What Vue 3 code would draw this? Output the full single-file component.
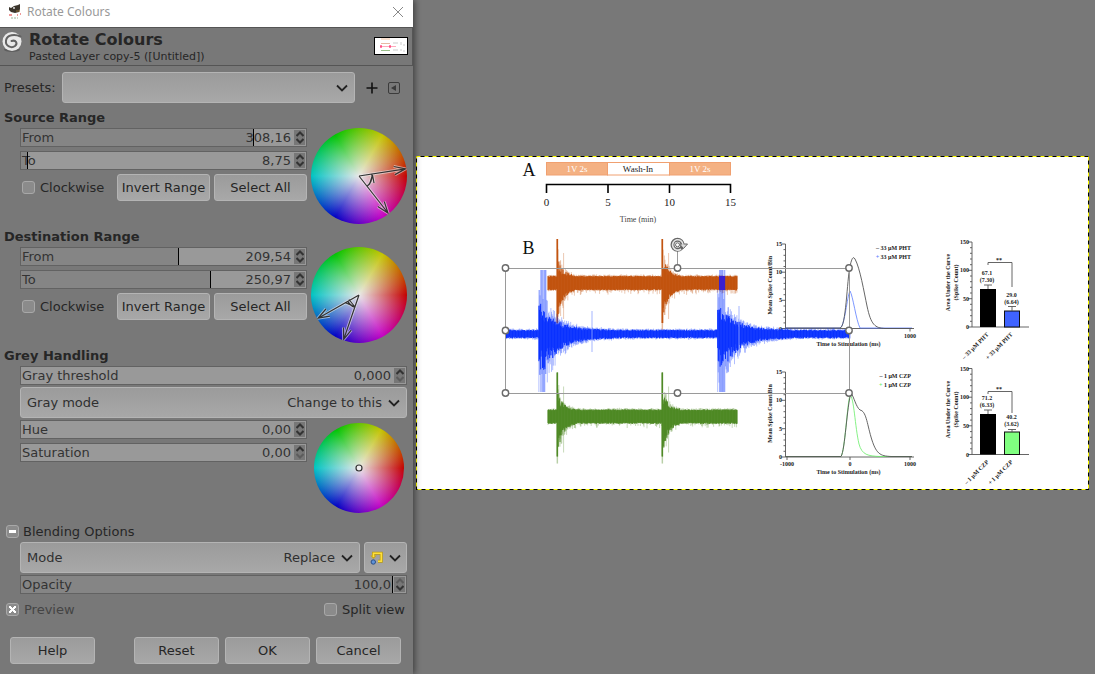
<script setup>
import { ref } from 'vue'

const polar = (deg, r) => {
  const a = (deg * Math.PI) / 180
  return [48 + Math.cos(a) * r, 48 - Math.sin(a) * r]
}
const pt = ([x, y]) => `${x.toFixed(1)} ${y.toFixed(1)}`

function ray(deg) {
  const tip = polar(deg, 47)
  const head = (side) => {
    const a = ((deg + 180 + side * 20) * Math.PI) / 180
    return [tip[0] + Math.cos(a) * 12, tip[1] - Math.sin(a) * 12]
  }
  return `M48 48L${pt(tip)}M${pt(head(1))}L${pt(tip)}L${pt(head(-1))}`
}

function rangePath(from, to, marker) {
  const s = polar(from, 13)
  const e = polar(to, 13)
  return `${ray(from)}${ray(to)}M${pt(s)}A13 13 0 0 0 ${pt(e)}${marker}`
}

const sections = [
  {
    id: 'source', title: 'Source Range',
    path: rangePath(308.16, 368.75, 'M58.500 56.500L61.500 47L63 55'),
    fields: [
      { id: 'source-from', label: 'From', value: '308,16', fill: 85.6 },
      { id: 'source-to', label: 'To', value: '8,75', fill: 2.4 },
    ],
  },
  {
    id: 'dest', title: 'Destination Range',
    path: rangePath(209.54, 250.97, 'M34 55.500L44 60L38 52.500'),
    fields: [
      { id: 'dest-from', label: 'From', value: '209,54', fill: 58.2 },
      { id: 'dest-to', label: 'To', value: '250,97', fill: 69.7 },
    ],
  },
]
const greyFields = [
  { id: 'hue', label: 'Hue', value: '0,00', fill: 0 },
  { id: 'saturation', label: 'Saturation', value: '0,00', fill: 0, atMin: true },
]
const preview = ref(true)

let seed = 7
const rand = () => {
  seed = (seed * 16807) % 2147483647
  return seed / 2147483647
}

function trace(x0, x1, step, cy, envelope) {
  let d = ''
  for (let x = x0; x <= x1; x += step) {
    const [up, down] = envelope(x)
    d += `M${x.toFixed(1)} ${(cy - up).toFixed(1)}V${(cy + down).toFixed(1)}`
  }
  return d
}

function bandEnvelope(light) {
  return (x) => {
    let up = 6 + rand() * 1.2
    let down = 6 + rand() * 1.4
    if (light) {
      up += rand() * 1.6
      down += rand() ** 4 * 5
    }
    for (const start of [556.5, 661.5]) {
      const d = x - start
      if (d >= 0 && d <= 1.4) return [44, light ? 47 : 40]
      if (d > 1.4 && d < 18) {
        const k = Math.exp(-d / 5.5) * (light ? 1.1 : 0.8)
        up += (0.2 + rand() * 0.8) * 34 * k
        down += (0.5 + rand() * 0.5) * 46 * k
      }
      if (light && d >= 7 && d <= 7.6) return [30, 36]
    }
    return [up, down]
  }
}

function blueEnvelope(light) {
  return (x) => {
    let up = 2.8 + rand() * 1.6
    let down = 2.8 + rand() * 1.6
    if (light) {
      up += rand() * 1.6
      down += rand() * 1.6
    }
    for (const start of [538.5, 717.5]) {
      const d = x - start
      if (light && d >= 0 && d < 0.8) return [44, 58]
      if (light && d >= 2 && d < 8) return [rand() > 0.12 ? 64 : 35, rand() > 0.2 ? 58 : 40]
      if (d >= 0 && d < 75) {
        const k = Math.exp(-d / 17) * (light ? 1.45 : 0.9)
        const rise = Math.min(1, 0.5 + d / 8)
        up += (0.4 + rand() * 0.6) * 34 * k
        down += (0.4 + rand() * 0.6) * 52 * k * rise
      }
    }
    return [up, down]
  }
}

const waves = [
  { d: trace(548, 737.5, 0.6, 283, bandEnvelope(true)), cls: 'orange light' },
  { d: trace(548, 737.5, 0.6, 283, bandEnvelope(false)), cls: 'orange' },
  { d: trace(548, 737.5, 0.6, 416.5, bandEnvelope(true)), cls: 'green light' },
  { d: trace(548, 737.5, 0.6, 416.5, bandEnvelope(false)), cls: 'green' },
  { d: trace(506.5, 850, 0.6, 334, blueEnvelope(true)), cls: 'blue light' },
  { d: trace(506.5, 850, 0.6, 334, blueEnvelope(false)), cls: 'blue' },
]

const ticks = (x, top, bottom, n, major) => {
  let d = ''
  for (let i = 0; i <= n; i++) {
    const y = bottom - ((bottom - top) * i) / n
    d += `M${x - (i % major ? 2 : 4)} ${y.toFixed(1)}H${x}`
  }
  return d
}

const lineCharts = [
  {
    top: 244, bottom: 328.5, drug: '33 μM PHT', color: '#5b7cff', legend: 250,
    xs: [['1000', 910]],
    main: 'M785 328H840C846 328 847 280 850 266C852 258 853 256 855 259C860 268 864 292 867 306C871 325 875 328 885 328.5H912',
    second: 'M785 328H840C845 326 847 296 850 291C853 296 856 320 860 328H912',
  },
  {
    top: 372, bottom: 457, drug: '1 μM CZP', color: '#67ee67', legend: 378,
    xs: [['-1000', 787], ['0', 850], ['1000', 910]],
    main: 'M785 456.5H841C845 451 847 405 851 393C854 397 856 407 860 410C866 411 867 423 871 437C876 454 880 456 891 456.5H912',
    second: 'M785 456.5H841C845 451 847 405 850 395C854 397 855 427 859 444C862 455 868 456 880 456.5H912',
  },
]

const barCharts = [
  {
    top: 242, bottom: 327, drug: '33 μM PHT', color: '#3f63ff',
    a: 289, b: 311, errA: 285, errB: 306.5, ta: ['67.1', '(7.30)', 275], tb: ['29.0', '(6.64)', 297],
    bracket: 'M988 265V262.5H1012V287', star: 262,
  },
  {
    top: 368.5, bottom: 454.5, drug: '1 μM CZP', color: '#80ff80',
    a: 414, b: 432, errA: 410, errB: 429.5, ta: ['71.2', '(6.33)', 400], tb: ['40.2', '(3.62)', 419],
    bracket: 'M988 394V391.5H1012V413', star: 391,
  },
]

const handles = [
  [505.5, 268], [677.5, 268], [849, 268], [505.5, 330.5], [849, 330.5],
  [505.5, 393], [677.5, 393], [849, 393],
]
</script>

<template>
  <div class="screen">
    <section class="dialog" aria-label="Rotate Colours">
      <div class="titlebar">
        <svg class="app-icon" viewBox="0 0 14 16" aria-hidden="true">
          <path d="M1 3l2 1 3-2 4-1 2-1v5l-1 3-4 1-4-1-2-2z" fill="#3b352c" />
          <circle cx="6" cy="4" r="1" fill="#ddd" />
          <path d="M8 7h4" stroke="#8a6a35" />
          <path d="M1 11h3M9 11h1M12 10h1" stroke="#d33" />
          <path d="M3 14h7" stroke="#9bb59b" stroke-dasharray="2 1" />
        </svg>
        <span class="title-text">Rotate Colours</span>
        <button class="close" aria-label="Close">
          <svg viewBox="0 0 12 12"><path d="M1 1l10 10M11 1L1 11" /></svg>
        </button>
      </div>

      <header class="header">
        <svg class="logo" viewBox="0 0 22 22" aria-hidden="true">
          <ellipse cx="11" cy="18.500" rx="8" ry="2.500" fill="#4c4c4c" opacity=".6" />
          <circle cx="11" cy="10.500" r="9.500" fill="#e8e8e8" />
          <path d="M19.500 5.500C14 3 6 3.500 5 9.500C4.200 15.500 10.500 17.500 14 15C17 12.500 15 8.500 10.500 10" fill="none" stroke="#626262" stroke-width="2" stroke-linecap="round" />
        </svg>
        <div class="names">
          <h1>Rotate Colours</h1>
          <p>Pasted Layer copy-5 ([Untitled])</p>
        </div>
        <svg class="thumb" viewBox="0 0 34 18" aria-hidden="true">
          <rect x=".5" y=".5" width="33" height="17" fill="#fff" stroke="#000" />
          <path d="M7 2h9" stroke="#f4b183" opacity=".7" />
          <path d="M7 6.500h9" stroke="#e9b8a4" />
          <path d="M6 9.500h16" stroke="#fab" />
          <path d="M7 8v3M16 8v3" stroke="#f05" />
          <path d="M7 13.500h9" stroke="#9abf8a" />
          <path d="M19 6h5M19 13h5M27 5v3M30 7v2M27 12v2M29 14h2" stroke="#ccc" />
        </svg>
      </header>

      <div class="content">
        <div class="presets">
          <label for="presets">Presets:</label>
          <div class="combo">
            <select id="presets"><option></option></select>
            <svg class="chevron" viewBox="0 0 12 8"><path d="M1 1.500l5 5 5-5" /></svg>
          </div>
          <button class="bare plus" aria-label="Add preset">
            <svg viewBox="0 0 12 12"><path d="M6 .5v11M.5 6h11" /></svg>
          </button>
          <button class="bare menu" aria-label="Manage presets">
            <svg viewBox="0 0 12 12">
              <rect x=".5" y=".5" width="11" height="11" rx="1.500" fill="none" stroke="#3b3b3b" />
              <path d="M8 3v6L3 6z" fill="#3b3b3b" />
            </svg>
          </button>
        </div>

        <section v-for="s in sections" :key="s.id" class="group">
          <h2>{{ s.title }}</h2>
          <div class="with-wheel">
            <div class="fields">
              <div v-for="f in s.fields" :key="f.id" class="spin">
                <div class="track cursor" :style="{ '--fill': f.fill + '%' }">
                  <label :for="f.id">{{ f.label }}</label>
                  <input :id="f.id" type="text" :value="f.value" />
                </div>
                <div class="steps">
                  <button aria-label="Increase"><svg viewBox="0 0 8 6"><path d="M.5 5L4 1.500 7.500 5" /></svg></button>
                  <button aria-label="Decrease"><svg viewBox="0 0 8 6"><path d="M.5 1L4 4.500 7.500 1" /></svg></button>
                </div>
              </div>
              <div class="range-row">
                <label class="check"><input type="checkbox" />Clockwise</label>
                <button class="btn">Invert Range</button>
                <button class="btn">Select All</button>
              </div>
            </div>
            <svg class="wheel" viewBox="0 0 96 96" aria-hidden="true">
              <path class="halo" :d="s.path" />
              <path class="ink" :d="s.path" />
            </svg>
          </div>
        </section>

        <section class="group">
          <h2>Grey Handling</h2>
          <div class="inset stack">
            <div class="spin">
              <div class="track">
                <label for="threshold">Gray threshold</label>
                <input id="threshold" type="text" value="0,000" />
              </div>
              <div class="steps">
                <button aria-label="Increase"><svg viewBox="0 0 8 6"><path d="M.5 5L4 1.500 7.500 5" /></svg></button>
                <button aria-label="Decrease" disabled><svg viewBox="0 0 8 6"><path d="M.5 1L4 4.500 7.500 1" /></svg></button>
              </div>
            </div>
            <div class="combo">
              <label for="gray-mode">Gray mode</label>
              <select id="gray-mode"><option>Change to this</option></select>
              <svg class="chevron" viewBox="0 0 12 8"><path d="M1 1.500l5 5 5-5" /></svg>
            </div>
          </div>
          <div class="with-wheel grey">
            <div class="fields">
              <div v-for="f in greyFields" :key="f.id" class="spin">
                <div class="track">
                  <label :for="f.id">{{ f.label }}</label>
                  <input :id="f.id" type="text" :value="f.value" />
                </div>
                <div class="steps">
                  <button aria-label="Increase"><svg viewBox="0 0 8 6"><path d="M.5 5L4 1.500 7.500 5" /></svg></button>
                  <button aria-label="Decrease" :disabled="f.atMin"><svg viewBox="0 0 8 6"><path d="M.5 1L4 4.500 7.500 1" /></svg></button>
                </div>
              </div>
            </div>
            <svg class="wheel small" viewBox="0 0 90 90" aria-hidden="true">
              <circle cx="45" cy="45" r="3" fill="#eee" stroke="#333" stroke-width="1.200" />
            </svg>
          </div>
        </section>

        <section class="blending">
          <button class="bare expander" aria-expanded="true"><span class="minus"></span>Blending Options</button>
          <div class="inset stack">
            <div class="mode-row">
              <div class="combo">
                <label for="mode">Mode</label>
                <select id="mode"><option>Replace</option></select>
                <svg class="chevron" viewBox="0 0 12 8"><path d="M1 1.500l5 5 5-5" /></svg>
              </div>
              <button class="combo blend" aria-label="Blend mode group">
                <svg class="loop" viewBox="0 0 14 14">
                  <path d="M3.500 5V2.200H11.300v8H8" fill="none" stroke="#b99b12" stroke-width="3" />
                  <path d="M.3 4.500h6.400l-3.200 3.500z" fill="#c9a818" />
                  <path d="M3.500 6V2.200H11.300v8H8" fill="none" stroke="#ffe03a" stroke-width="1.600" />
                  <circle cx="3.300" cy="11" r="2.200" fill="#5f93d8" stroke="#2c4f86" />
                </svg>
                <svg class="chevron" viewBox="0 0 12 8"><path d="M1 1.500l5 5 5-5" /></svg>
              </button>
            </div>
            <div class="spin opacity">
              <div class="track cursor" :style="{ '--fill': '100%' }">
                <label for="opacity">Opacity</label>
                <input id="opacity" type="text" value="100,0" />
              </div>
              <div class="steps">
                <button aria-label="Increase" disabled><svg viewBox="0 0 8 6"><path d="M.5 5L4 1.500 7.500 5" /></svg></button>
                <button aria-label="Decrease"><svg viewBox="0 0 8 6"><path d="M.5 1L4 4.500 7.500 1" /></svg></button>
              </div>
            </div>
          </div>
        </section>

        <div class="views">
          <label class="check dim"><input v-model="preview" type="checkbox" />Preview</label>
          <label class="check"><input type="checkbox" />Split view</label>
        </div>

        <footer class="actions">
          <button class="btn help">Help</button>
          <button class="btn">Reset</button>
          <button class="btn">OK</button>
          <button class="btn">Cancel</button>
        </footer>
      </div>
    </section>

    <main class="workspace">
      <svg class="figure" viewBox="416 156 673 334" role="img" aria-label="Figure">
        <rect x="416" y="156" width="673" height="334" fill="#fff" />

        <text x="522.500" y="175.500" class="letter">A</text>
        <g stroke="#f0a070">
          <rect x="546.500" y="162.500" width="61" height="12.500" fill="#f4b183" />
          <rect x="607.500" y="162.500" width="62" height="12.500" fill="#fff" />
          <rect x="669.500" y="162.500" width="61" height="12.500" fill="#f4b183" />
        </g>
        <g class="phase">
          <text x="577" y="172" fill="#fff">1V 2s</text>
          <text x="638" y="172" fill="#222">Wash-In</text>
          <text x="700" y="172" fill="#fff">1V 2s</text>
        </g>
        <path d="M546.500 193V184.500H730.500V193M608 184.500V193M669.500 184.500V193" fill="none" stroke="#000" stroke-width="1.600" />
        <g class="minutes">
          <text x="546.500" y="206">0</text>
          <text x="608" y="206">5</text>
          <text x="669.500" y="206">10</text>
          <text x="730.500" y="206">15</text>
        </g>
        <text x="638" y="222" class="time">Time (min)</text>
        <text x="522.500" y="254" class="letter">B</text>

        <g v-for="(c, i) in lineCharts" :key="'l' + i" class="chart">
          <path :d="`M785.500 ${c.top}V${c.bottom}H914` + ticks(785.5, c.top, c.bottom, 15, 5)" class="axis" />
          <path v-for="x in c.xs" :key="x[0]" :d="`M${x[1]} ${c.bottom}v3`" class="axis" />
          <text v-for="n in 4" :key="n" x="782" :y="c.bottom + 2 - ((n - 1) * (c.bottom - c.top)) / 3" text-anchor="end">{{ (n - 1) * 5 }}</text>
          <text v-for="x in c.xs" :key="'t' + x[0]" :x="x[1]" :y="c.bottom + 9" text-anchor="middle">{{ x[0] }}</text>
          <path :d="c.second" fill="none" :stroke="c.color" stroke-width=".8" />
          <path :d="c.main" fill="none" stroke="#555" stroke-width=".9" />
          <text x="848.500" :y="c.bottom + 17" text-anchor="middle">Time to Stimulation (ms)</text>
          <text :transform="`translate(772 ${(c.top + c.bottom) / 2 - 1}) rotate(-90)`" text-anchor="middle">Mean Spike Count/Bin</text>
          <text x="911" :y="c.legend" text-anchor="end">– {{ c.drug }}</text>
          <text x="911" :y="c.legend + 9" text-anchor="end"><tspan :fill="c.color">+</tspan> {{ c.drug }}</text>
        </g>

        <g v-for="(c, i) in barCharts" :key="'b' + i" class="chart">
          <path :d="`M972 ${c.top}V${c.bottom}H1029` + ticks(972, c.top, c.bottom, 15, 5)" class="axis" />
          <text v-for="n in 4" :key="n" x="969" :y="c.bottom + 2 - ((n - 1) * (c.bottom - c.top)) / 3" text-anchor="end">{{ (n - 1) * 50 }}</text>
          <rect x="980" :y="c.a" width="16" :height="c.bottom - c.a" fill="#000" />
          <rect x="1004.500" :y="c.b" width="15" :height="c.bottom - c.b" :fill="c.color" stroke="#111" />
          <path :d="`M988 ${c.a}V${c.errA}M984 ${c.errA}h8M1012 ${c.b}V${c.errB}M1008 ${c.errB}h8`" class="axis" />
          <path :d="c.bracket" class="axis" />
          <text x="999" :y="c.star" text-anchor="middle">**</text>
          <g class="values">
            <text x="987" :y="c.ta[2]">{{ c.ta[0] }}</text>
            <text x="987" :y="c.ta[2] + 7">{{ c.ta[1] }}</text>
            <text x="1011.500" :y="c.tb[2]">{{ c.tb[0] }}</text>
            <text x="1011.500" :y="c.tb[2] + 7">{{ c.tb[1] }}</text>
          </g>
          <text :transform="`translate(950 ${(c.top + c.bottom) / 2 - 2}) rotate(-90)`" text-anchor="middle">Area Under the Curve</text>
          <text :transform="`translate(958 ${(c.top + c.bottom) / 2 - 2}) rotate(-90)`" text-anchor="middle">(Spike Count)</text>
          <text :transform="`translate(989 ${c.bottom + 8}) rotate(-45)`" text-anchor="end">– {{ c.drug }}</text>
          <text :transform="`translate(1013 ${c.bottom + 8}) rotate(-45)`" text-anchor="end">+ {{ c.drug }}</text>
        </g>

        <path v-for="(w, i) in waves" :key="'w' + i" :d="w.d" :class="['wave', w.cls]" />
        <rect x="719" y="276" width="6" height="14" fill="#3a1fd0" />
        <path d="M592 311V352M739 306V352" stroke="#8ea2ff" stroke-width=".8" />

        <path d="M505.500 268.500H849.500V393.500H505.500ZM677.500 268V250" fill="none" stroke="#9a9a9a" />
        <circle v-for="(h, i) in handles" :key="'h' + i" :cx="h[0]" :cy="h[1]" r="3.200" fill="#fff" stroke="#6b6b6b" stroke-width="1.400" />
        <circle cx="677.500" cy="244.800" r="5" fill="none" stroke="#666" stroke-width="4" />
        <path d="M682 244h5.500l-4 4.500-4-4.500z" fill="#ddd" stroke="#666" />
        <path d="M683 244.800A5.200 5.200 0 1 0 681 249" fill="none" stroke="#e4e4e4" stroke-width="1.600" />
        <circle cx="677.500" cy="244.800" r="2" fill="#fff" stroke="#666" />

        <rect x="416.500" y="156.500" width="672" height="333" fill="none" stroke="#000" />
        <rect x="416.500" y="156.500" width="672" height="333" fill="none" stroke="#ff0" stroke-dasharray="4 4" />
      </svg>
    </main>
  </div>
</template>

<style>
html, body { margin: 0; background: #787878; }
</style>

<style scoped>
.screen {
  display: grid;
  grid-template-columns: minmax(413px, 37%) 1fr;
  min-height: 100vh;
  background: #787878;
  font: 13px/19px "DejaVu Sans", sans-serif;
  color: #262626;
}
.screen * { box-sizing: border-box; }
button, input, select { font: inherit; color: inherit; margin: 0; padding: 0; border: 0; background: none; }
svg { display: block; flex: none; }
h1, h2, p { margin: 0; }
.dialog { position: relative; box-shadow: 2px 0 6px rgba(0, 0, 0, .45); background: #787878; }
.titlebar {
  display: flex; align-items: center; height: 27px; padding: 0 9px 3px 8px; background: #fff;
  font: 12px/24px "Noto Sans", sans-serif; color: #999;
}
.app-icon { width: 14px; height: 16px; }
.title-text { flex: 1; padding-left: 5px; }
.close svg { width: 12px; height: 12px; }
.close path { stroke: #888; fill: none; }
.header {
  display: flex; height: 39px; padding: 2px 4px 0 1px;
  border: 1px solid #555; border-left: 0;
}
.logo { width: 22px; height: 22px; margin-top: 1px; }
.names { flex: 1; padding-left: 6px; }
.names h1 { font-size: 16px; line-height: 19px; }
.names p { font-size: 11px; line-height: 15px; }
.thumb { width: 34px; height: 18px; margin-top: 7px; }
.content { padding: 6px 6px 9px 4px; }
.presets { display: flex; align-items: center; padding-right: 7px; margin-bottom: 5px; }
.presets label { width: 58px; }
.presets .combo { flex: 1; }
.bare { display: flex; align-items: center; }
.plus { margin: 0 10px 0 11px; }
.plus svg, .menu svg { width: 12px; height: 12px; }
.plus path { stroke: #111; stroke-width: 1.600; }
.combo {
  display: flex; align-items: center; height: 31px; padding: 0 6px;
  border: 1px solid #b4b4b4; border-radius: 3px;
  background: linear-gradient(#9b9b9b, #a8a8a8); color: #303030;
}
.combo select { flex: 1; min-width: 0; appearance: none; text-align: right; text-align-last: right; outline: 0; }
.chevron { width: 12px; height: 8px; margin-left: 6px; }
.chevron path { fill: none; stroke: #222; stroke-width: 1.800; }
.group { margin-bottom: 3px; }
h2 { font-size: 13px; line-height: 19px; padding-bottom: 1px; }
.inset { padding-left: 16px; }
.stack { display: flex; flex-direction: column; gap: 2px; }
.with-wheel { display: flex; gap: 4px; padding-left: 16px; }
.with-wheel.grey { margin-top: 2px; }
.fields { flex: 1; display: flex; flex-direction: column; gap: 4px; }
.spin { display: flex; height: 19px; border: 1px solid #626262; background: #999; }
.track {
  position: relative; flex: 1; display: flex; align-items: center; min-width: 0;
  padding: 0 2px 0 1px; line-height: 17px; color: #333;
}
.cursor { background: linear-gradient(to right, #858585 var(--fill), #999 var(--fill)); }
.cursor::after {
  content: ""; position: absolute; top: 0; bottom: 0; width: 1px;
  left: calc(var(--fill) - 1px); background: #000;
}
.track input { flex: 1; min-width: 0; width: 60px; height: 17px; text-align: right; outline: 0; }
.steps { display: flex; flex-direction: column; width: 13px; padding: 1px; background: #999; }
.steps button {
  flex: 1; display: flex; align-items: center; justify-content: center; background: #777;
}
.steps svg { width: 8px; height: 6px; }
.steps path { fill: none; stroke: #333; stroke-width: 2; }
.steps button:disabled path { stroke: #5c5c5c; }
.range-row { display: flex; gap: 4px; }
.check { display: flex; align-items: center; gap: 6px; }
.check.dim { color: #444; }
.range-row .check { flex: 1; gap: 5px; padding-left: 2px; }
.check input {
  appearance: none; display: flex; align-items: center; justify-content: center;
  width: 13px; height: 13px; border: 1px solid #a8a8a8; border-radius: 3px; background: #8b8b8b;
}
.check input:checked::before {
  content: "";
  width: 7px; height: 7px;
  background:
    linear-gradient(45deg, transparent 37%, #fff 37% 63%, transparent 63%),
    linear-gradient(-45deg, transparent 37%, #fff 37% 63%, transparent 63%);
}
.btn {
  width: 93px; height: 27px; border: 1px solid #b4b4b4; border-radius: 3px;
  background: linear-gradient(#9b9b9b, #a8a8a8);
}
.wheel {
  width: 96px; height: 96px; border-radius: 50%;
  background:
    radial-gradient(closest-side, #e8e8e8, rgba(200, 200, 200, 0)),
    conic-gradient(from 90deg, #c40000, #c400c4, #0000c4, #00c4c4, #00c400, #c4c400, #c40000);
}
.wheel.small { width: 90px; height: 90px; margin: 3px; }
.halo { fill: none; stroke: rgba(235, 235, 235, .6); stroke-width: 3; }
.ink { fill: none; stroke: #333; stroke-width: 1.200; }
.blending { padding-top: 3px; }
.expander { height: 19px; padding-left: 2px; gap: 4px; margin-bottom: 1px; }
.minus {
  display: flex; align-items: center; justify-content: center;
  width: 13px; height: 13px; border: 1px solid #a8a8a8; border-radius: 3px; background: #8b8b8b;
}
.minus::before { content: ""; width: 7px; height: 3px; background: #fff; }
.mode-row { display: flex; gap: 4px; }
.mode-row .combo:first-child { flex: 1; }
.blend { width: 43px; padding: 0 5px; }
.loop { width: 14px; height: 14px; }
.blend .chevron { margin-left: 5px; }
.views { display: flex; justify-content: space-between; padding: 0 2px; margin-top: 6px; }
.views .check { gap: 5px; }
.actions { display: flex; gap: 6px; padding: 0 6px; margin-top: 18px; }
.actions .btn { width: 85px; }
.actions .help { margin-right: auto; }
.workspace { padding: 156px 6px 0 3px; }
.figure { width: 100%; height: auto; font-family: "Liberation Serif", serif; }
.letter { font-size: 18px; fill: #111; }
.phase text { font-size: 9px; text-anchor: middle; }
.minutes text { font-size: 11px; text-anchor: middle; fill: #222; }
.time { font-size: 8px; text-anchor: middle; fill: #444; }
.chart text { font-size: 6px; font-weight: 700; fill: #222; }
.values text { text-anchor: middle; }
.axis { fill: none; stroke: #555; stroke-width: .9; }
.wave { fill: none; stroke-width: 1; }
.orange { stroke: #c0500a; }
.green { stroke: #4b8720; }
.blue { stroke: #0a32ff; }
.light { opacity: .45; stroke-width: .7; }
</style>
